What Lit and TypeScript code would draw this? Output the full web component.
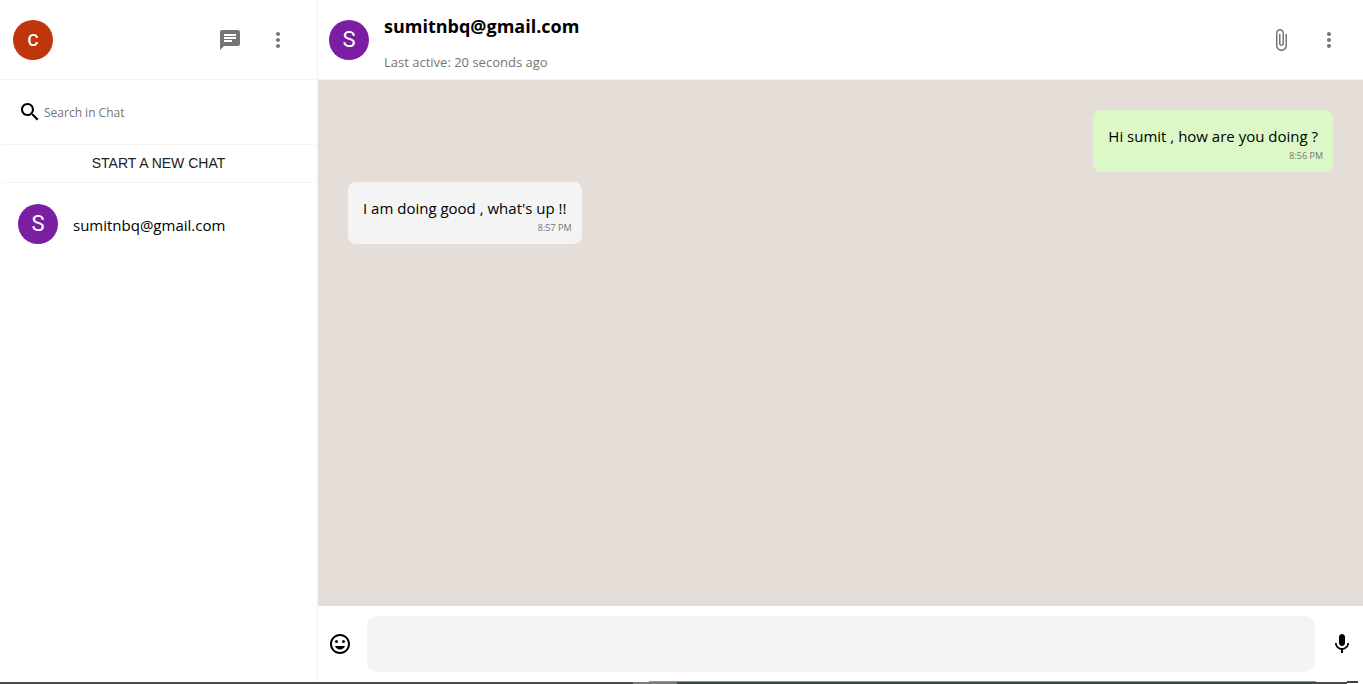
import { LitElement, html, css, svg } from "lit";
import { customElement, property, state } from "lit/decorators.js";

const icons = {
  chat: svg`<path d="M20 2H4c-1.100 0-1.990.9-1.990 2L2 22l4-4h14c1.100 0 2-.9 2-2V4c0-1.100-.9-2-2-2zM6 9h12v2H6V9zm8 5H6v-2h8v2zm4-6H6V6h12v2z"/>`,
  more: svg`<path d="M12 8c1.100 0 2-.9 2-2s-.9-2-2-2-2 .9-2 2 .9 2 2 2zm0 2c-1.100 0-2 .9-2 2s.9 2 2 2 2-.9 2-2-.9-2-2-2zm0 6c-1.100 0-2 .9-2 2s.9 2 2 2 2-.9 2-2-.9-2-2-2z"/>`,
  search: svg`<path d="M15.500 14h-.79l-.28-.27C15.410 12.590 16 11.110 16 9.500 16 5.910 13.090 3 9.500 3S3 5.910 3 9.500 5.910 16 9.500 16c1.610 0 3.090-.59 4.230-1.570l.27.28v.79l5 4.990L20.490 19l-4.990-5zm-6 0C7.010 14 5 11.990 5 9.500S7.010 5 9.500 5 14 7.010 14 9.500 11.990 14 9.500 14z"/>`,
  attach: svg`<path d="M16.500 6v11.500c0 2.210-1.790 4-4 4s-4-1.790-4-4V5c0-1.380 1.120-2.500 2.500-2.500s2.500 1.120 2.500 2.500v10.500c0 .55-.45 1-1 1s-1-.45-1-1V6H10v9.500c0 1.380 1.120 2.500 2.500 2.500s2.500-1.120 2.500-2.500V5c0-2.210-1.790-4-4-4S7 2.790 7 5v12.500c0 3.040 2.460 5.500 5.500 5.500s5.500-2.460 5.500-5.500V6h-1.500z"/>`,
  emoji: svg`<circle cx="15.500" cy="9.500" r="1.500"/><circle cx="8.500" cy="9.500" r="1.500"/><path d="M11.990 2C6.470 2 2 6.480 2 12s4.470 10 9.990 10C17.520 22 22 17.520 22 12S17.520 2 11.990 2zM12 20c-4.420 0-8-3.580-8-8s3.580-8 8-8 8 3.580 8 8-3.580 8-8 8zM7 14c.8 2.050 2.700 3.500 5 3.500s4.200-1.450 5-3.500z"/>`,
  mic: svg`<path d="M12 14c1.660 0 2.990-1.340 2.990-3L15 5c0-1.660-1.340-3-3-3S9 3.340 9 5v6c0 1.660 1.340 3 3 3zm5.300-3c0 3-2.540 5.100-5.300 5.100S6.700 14 6.700 11H5c0 3.410 2.720 6.230 6 6.720V21h2v-3.280c3.280-.48 6-3.300 6-6.720h-1.700z"/>`,
};

const icon = (name: keyof typeof icons) =>
  html`<svg viewBox="0 0 24 24" width="24" height="24" fill="currentColor" aria-hidden="true">${icons[name]}</svg>`;

interface Message {
  text: string;
  time: string;
  mine: boolean;
}

@customElement("user-avatar")
export class UserAvatar extends LitElement {
  static styles = css`
    :host {
      display: flex;
      flex: none;
      align-items: center;
      justify-content: center;
      width: 40px;
      height: 40px;
      border-radius: 50%;
      background: #7b1fa2;
      color: #fff;
      font: 400 22px/40px Roboto, sans-serif;
    }
    :host([tone="orange"]) {
      background: #bf360c;
      font-size: 17px;
      font-weight: 500;
    }
  `;
  @property() letter = "";
  render() {
    return html`${this.letter}`;
  }
}

@customElement("app-root")
export class AppRoot extends LitElement {
  static styles = css`
    * {
      box-sizing: border-box;
    }
    :host {
      display: flex;
      flex-direction: column;
      height: 100vh;
      background: #fff;
      color: #000;
      font: 15px/22px "Open Sans", "Noto Sans", sans-serif;
    }
    button,
    input {
      border: 0;
      padding: 0;
      background: none;
      font: inherit;
      color: inherit;
    }
    svg {
      display: block;
    }
    .app {
      flex: 1;
      min-height: 0;
      display: grid;
      grid-template-columns: minmax(300px, 318fr) 1045fr;
    }
    .sidebar {
      display: flex;
      flex-direction: column;
      border-right: 1px solid #f4f4f4;
    }
    .bar {
      display: flex;
      align-items: center;
      height: 80px;
      border-bottom: 1px solid #f4f4f4;
    }
    .side-bar {
      padding: 0 15px 0 13px;
    }
    .chat-bar {
      padding: 0 10px 0 11px;
    }
    .actions {
      display: flex;
      margin-left: auto;
    }
    .icon-button {
      padding: 12px;
      color: #757575;
    }
    .search {
      display: flex;
      align-items: center;
      gap: 2px;
      height: 64px;
      padding: 0 18px;
    }
    .search-input {
      flex: 1;
      min-width: 0;
      padding-top: 2px;
      font-size: 12px;
      outline: none;
    }
    .search-input::placeholder {
      color: #757575;
      opacity: 1;
    }
    .new-chat {
      height: 39px;
      padding-bottom: 2px;
      border: solid #f4f4f4;
      border-width: 1px 0;
      border-radius: 4px;
      color: #212121;
      font: 14px/24px "Liberation Sans", Arial, sans-serif;
    }
    .contact {
      display: flex;
      align-items: center;
      gap: 15px;
      padding: 21px 18px;
      text-align: left;
    }
    .contact-name {
      padding-top: 2px;
    }
    .chat {
      display: flex;
      flex-direction: column;
      min-width: 0;
    }
    .peer {
      margin-left: 15px;
      padding-top: 8px;
    }
    .peer-name {
      margin: 0 0 14px;
      font-size: 18px;
      line-height: 22px;
      font-weight: 700;
    }
    .peer-status {
      margin: 0;
      color: #757575;
      font-size: 13px;
      line-height: 22px;
    }
    .messages {
      flex: 1;
      display: flex;
      flex-direction: column;
      align-items: flex-start;
      gap: 10px;
      padding: 30px;
      background: #e5ddd8;
      overflow: auto;
    }
    .message {
      padding: 15px 15px 8px;
      border-radius: 8px;
      background: #f4f4f4;
    }
    .mine {
      align-self: flex-end;
      background: #dcf8c6;
    }
    .text {
      margin: 0;
      line-height: 23px;
    }
    .time {
      display: block;
      margin-right: -5px;
      color: #757575;
      font-size: 9px;
      line-height: 16px;
      text-align: right;
    }
    .composer {
      display: flex;
      align-items: center;
      gap: 15px;
      padding: 10px 9px 9px 10px;
    }
    .composer-input {
      flex: 1;
      min-width: 0;
      height: 56px;
      padding: 0 20px;
      border-radius: 10px;
      background: #f4f4f4;
      outline: none;
    }
    .edge {
      display: grid;
      grid-template-columns: 633fr 16fr 28fr 639fr 31fr 11fr 5fr;
      height: 3px;
    }
    .edge-part {
      border-top: 1px solid #fff;
      background: #484848;
    }
    .edge-light {
      background: #7c7c7c;
    }
    .edge-green {
      border-color: #5fb37c;
    }
    .edge-dark {
      background: #3a4443;
    }
    .edge-raised {
      border-top: 0;
      border-bottom: 1px solid #fff;
    }
  `;

  @state() private messages: Message[] = [
    { text: "Hi sumit , how are you doing ?", time: "8:56 PM", mine: true },
    { text: "I am doing good , what's up !!", time: "8:57 PM", mine: false },
  ];

  render() {
    return html`
      <div class="app">
        <aside class="sidebar">
          <header class="bar side-bar">
            <user-avatar letter="C" tone="orange"></user-avatar>
            <div class="actions">
              <button class="icon-button" aria-label="Chats">${icon("chat")}</button>
              <button class="icon-button" aria-label="Menu">${icon("more")}</button>
            </div>
          </header>
          <label class="search">
            ${icon("search")}
            <input class="search-input" type="text" placeholder="Search in Chat" aria-label="Search in Chat" />
          </label>
          <button class="new-chat">START A NEW CHAT</button>
          <button class="contact">
            <user-avatar letter="S"></user-avatar>
            <span class="contact-name">sumitnbq@gmail.com</span>
          </button>
        </aside>
        <main class="chat">
          <header class="bar chat-bar">
            <user-avatar letter="S"></user-avatar>
            <div class="peer">
              <h1 class="peer-name">sumitnbq@gmail.com</h1>
              <p class="peer-status">Last active: 20 seconds ago</p>
            </div>
            <div class="actions">
              <button class="icon-button" aria-label="Attach file">${icon("attach")}</button>
              <button class="icon-button" aria-label="Chat menu">${icon("more")}</button>
            </div>
          </header>
          <section class="messages">
            ${this.messages.map(
              (m) => html`<article class="message ${m.mine ? "mine" : ""}">
                <p class="text">${m.text}</p>
                <time class="time">${m.time}</time>
              </article>`
            )}
          </section>
          <form class="composer" @submit=${(e: Event) => e.preventDefault()}>
            <button type="button" aria-label="Emoji">${icon("emoji")}</button>
            <input class="composer-input" type="text" aria-label="Message" />
            <button type="button" aria-label="Record voice">${icon("mic")}</button>
          </form>
        </main>
      </div>
      <div class="edge">
        <span class="edge-part"></span>
        <span class="edge-part edge-light"></span>
        <span class="edge-part edge-light edge-green"></span>
        <span class="edge-part edge-dark edge-green"></span>
        <span class="edge-part"></span>
        <span class="edge-part edge-dark edge-raised"></span>
      </div>
    `;
  }
}
